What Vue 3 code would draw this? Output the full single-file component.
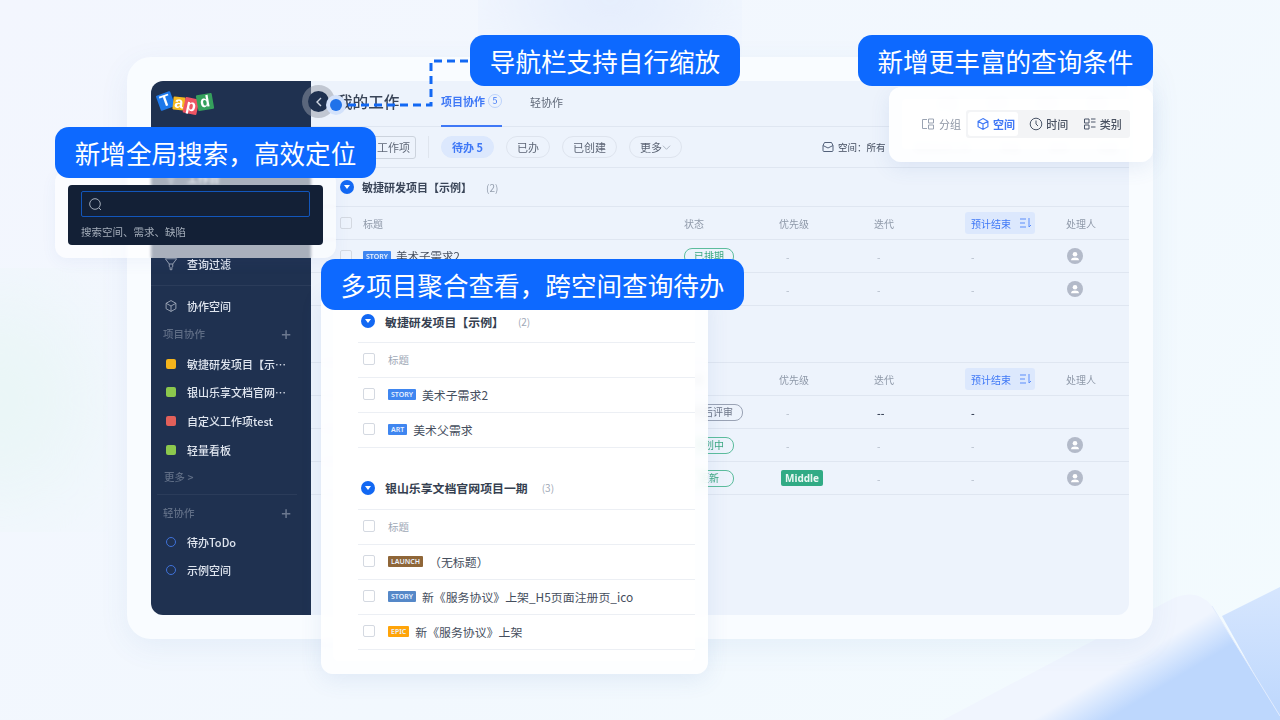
<template>
  <div class="page">
    <svg class="bg-shapes" width="1280" height="720" viewBox="0 0 1280 720">
      <defs>
        <linearGradient id="tri" x1="0" y1="0" x2="0" y2="1">
          <stop offset="0" stop-color="#d6e6fe" />
          <stop offset="1" stop-color="#bdd7fd" />
        </linearGradient>
        <linearGradient id="glass" gradientUnits="userSpaceOnUse" x1="1140" y1="655" x2="1160" y2="688">
          <stop offset="0" stop-color="#f0f5fe" />
          <stop offset="0.5" stop-color="#d6e6fe" />
          <stop offset="1" stop-color="#bdd7fd" />
        </linearGradient>
        <filter id="soft"><feGaussianBlur stdDeviation="50" /></filter>
      </defs>
      <ellipse cx="610" cy="0" rx="110" ry="50" fill="#dfe9fc" filter="url(#soft)" />
      <ellipse cx="0" cy="400" rx="90" ry="110" fill="#e9f6f6" filter="url(#soft)" />
      <polygon points="1222,616 1280,587 1280,720" fill="url(#tri)" />
      <path d="M943 720 L1168 601 Q1196 586 1212 606 L1280 716 L1280 720 Z" fill="url(#glass)" />
      <path d="M1212 606 L1280 716" fill="none" stroke="#e2ecfd" />
    </svg>

    <div class="frame">
      <div class="app">
        <aside class="side">
          <div class="logo">
            <span class="tile t1">T</span><span class="tile t2">a</span><span class="tile t3">p</span><span class="tile t4">d</span>
          </div>
          <div class="nav">
            <div v-for="n in topNav" :key="n" class="nav-item">
              <svg class="nav-ico" viewBox="0 0 16 16"><path d="M1.500 2h13L10 8v3l-1 .8V14.500H7V11.800L6 11V8zM6 8h4" /></svg>
              <span>{{ n }}</span>
            </div>
          </div>
          <div class="rule"></div>
          <div class="nav-item space-link">
            <svg class="nav-ico" viewBox="0 0 16 16"><path d="M8 1.800l5.600 3.100v6.200L8 14.200l-5.600-3.100V4.900zM2.400 4.900L8 8l5.600-3.100M8 8v6.200" /></svg>
            <span>协作空间</span>
          </div>
          <div class="label"><span>项目协作</span><b>+</b></div>
          <div v-for="p in projects" :key="p.name" class="nav-item">
            <i class="sq" :style="{ background: p.color }"></i>
            <span class="clip">{{ p.name }}</span>
          </div>
          <div class="more-link">更多 <span>&gt;</span></div>
          <div class="rule short"></div>
          <div class="label"><span>轻协作</span><b>+</b></div>
          <div v-for="s in lightSpaces" :key="s" class="nav-item">
            <i class="ring"></i>
            <span>{{ s }}</span>
          </div>
        </aside>

        <main class="main">
          <header class="head">
            <h1>我的工作</h1>
            <div class="tab on">项目协作 <em>5</em></div>
            <div class="tab">轻协作</div>
            <div class="head-right">
              <span>分组</span><span>空间</span><span>时间</span><span>类别</span>
            </div>
          </header>
          <div class="toolbar">
            <button class="add">添加工作项</button>
            <i class="vline"></i>
            <span class="pill on">待办 5</span>
            <span class="pill">已办</span>
            <span class="pill">已创建</span>
            <span class="pill">更多<svg width="9" height="9" viewBox="0 0 10 10"><path d="M1 3l4 4 4-4" fill="none" stroke="#a9b2c0" /></svg></span>
            <div class="tools">
              <svg width="12" height="12" viewBox="0 0 12 12"><path d="M2.500 1.500h7l1.500 3v5a1 1 0 0 1-1 1H2a1 1 0 0 1-1-1v-5zM1 4.500l5 2.500 5-2.500" fill="none" stroke="#53617a" /></svg>
              <span class="space-txt">空间：所有</span>
              <span class="ghost">项目协作工作</span>
              <span class="ghost">筛选</span>
              <span class="ghost">排序</span>
              <span class="ghost">视图</span>
            </div>
          </div>

          <section v-for="(g, gi) in groups" :key="g.name" class="group">
            <div class="g-title" :class="{ tall: gi === 1 }">
              <i class="caret"></i>
              <strong>{{ g.name }}</strong>
              <span>({{ g.rows.length }})</span>
            </div>
            <div class="t-row t-head">
              <i class="box"></i>
              <span>标题</span>
              <span>状态</span>
              <span>优先级</span>
              <span>迭代</span>
              <span class="sorted">预计结束
                <svg width="13" height="12" viewBox="0 0 13 12"><path d="M1 2h6M1 6h5M1 10h6M10 1v9l2-2" fill="none" stroke="#5a8dfb" /></svg>
              </span>
              <span>处理人</span>
            </div>
            <div v-for="r in g.rows" :key="r.title" class="t-row">
              <i class="box"></i>
              <span class="t-name"><u class="tag" :style="{ background: r.tagColor }">{{ r.tag }}</u>{{ r.title }}</span>
              <span><b class="status" :class="r.tone">{{ r.status }}</b></span>
              <span class="c-prio">
                <b v-if="r.prio" class="prio">{{ r.prio }}</b>
                <template v-else>-</template>
              </span>
              <span class="c-iter" :class="{ dark: r.noUser }">{{ r.noUser ? '--' : '-' }}</span>
              <span class="c-end" :class="{ dark: r.noUser }">-</span>
              <span>
                <svg v-if="!r.noUser" class="avatar" viewBox="0 0 16 16"><circle cx="8" cy="8" r="8" fill="#b3bac9" /><circle cx="8" cy="6.200" r="2.300" fill="#fff" /><path d="M4 12.200c0-2 1.800-2.700 4-2.700s4 .7 4 2.700z" fill="#fff" /></svg>
              </span>
            </div>
          </section>
        </main>
      </div>
    </div>

    <!-- 引导标注 -->
    <div class="handle"><svg width="8" height="10" viewBox="0 0 8 10"><path d="M6 1L2 5l4 4" fill="none" stroke="#cfd6e2" stroke-width="1.400" /></svg></div>
    <svg class="dash" width="140" height="60" viewBox="0 0 140 60">
      <path d="M136 3H86V47H0" fill="none" stroke="#1268f3" stroke-width="3" stroke-dasharray="8 5" />
    </svg>
    <i class="dot"></i>

    <div class="search-card">
      <div class="search-panel">
        <div class="search-input">
          <svg width="15" height="15" viewBox="0 0 15 15"><circle cx="7" cy="7" r="5.300" fill="none" stroke="#a4adba" /><path d="M11 11l2 2" stroke="#a4adba" /></svg>
        </div>
        <p>搜索空间、需求、缺陷</p>
      </div>
    </div>

    <div class="filter-card">
      <div class="filter-inner">
        <span class="f-plain">
          <svg width="14" height="14" viewBox="0 0 14 14"><path d="M6 2.500H1.500v9H6M7.500 2h5v4h-5zM7.500 8h5v4h-5z" fill="none" stroke="#9aa3b2" /></svg>分组
        </span>
        <div class="seg">
          <span class="seg-item on">
            <svg width="14" height="14" viewBox="0 0 16 16"><path d="M8 1.800l5.600 3.100v6.200L8 14.200l-5.600-3.100V4.900zM2.400 4.900L8 8l5.600-3.100M8 8v6.200" fill="none" stroke="#3f78f6" stroke-width="1.300" /></svg>空间
          </span>
          <span class="seg-item">
            <svg width="14" height="14" viewBox="0 0 14 14"><circle cx="7" cy="7" r="5.800" fill="none" stroke="#4a5568" /><path d="M7 3.500V7l2 2" fill="none" stroke="#4a5568" /></svg>时间
          </span>
          <span class="seg-item">
            <svg width="14" height="14" viewBox="0 0 14 14"><path d="M1.500 2h4.500v4H1.500zM8 2h4.500M8 5h4.500M1.500 8h4.500v4H1.500zM8 10h4.500" fill="none" stroke="#4a5568" /></svg>类别
          </span>
        </div>
      </div>
    </div>

    <div class="popup">
      <div class="popup-inner">
        <div v-for="(g, gi) in popupGroups" :key="g.name" class="p-group" :class="{ second: gi === 1 }">
          <div class="p-title">
            <i class="caret"></i>
            <strong>{{ g.name }}</strong>
            <span>({{ g.rows.length }})</span>
          </div>
          <div class="p-row muted"><i class="box"></i>标题</div>
          <div v-for="r in g.rows" :key="r.title" class="p-row">
            <i class="box"></i>
            <u class="tag" :style="{ background: r.tagColor }">{{ r.tag }}</u>
            <span>{{ r.title }}</span>
          </div>
        </div>
      </div>
    </div>

    <div class="callout c-nav">导航栏支持自行缩放</div>
    <div class="callout c-filter">新增更丰富的查询条件</div>
    <div class="callout c-search">新增全局搜索，高效定位</div>
    <div class="callout c-multi">多项目聚合查看，跨空间查询待办</div>
  </div>
</template>

<script setup>
const topNav = ['工作台', '我的工作', '消息通知', '查询过滤']
const projects = [
  { name: '敏捷研发项目【示例】', color: '#f4b41c' },
  { name: '银山乐享文档官网项目一期', color: '#8bc84d' },
  { name: '自定义工作项test', color: '#e2605a' },
  { name: '轻量看板', color: '#8bc84d' }
]
const lightSpaces = ['待办ToDo', '示例空间']

const STORY = '#3f86f0'
const groups = [
  {
    name: '敏捷研发项目【示例】',
    rows: [
      { tag: 'STORY', tagColor: STORY, title: '美术子需求2', status: '已排期', tone: 'green' },
      { tag: 'ART', tagColor: STORY, title: '美术父需求', status: '已排期', tone: 'green' }
    ]
  },
  {
    name: '银山乐享文档官网项目一期',
    rows: [
      { tag: 'LAUNCH', tagColor: '#8f6638', title: '（无标题）', status: '发布后评审', tone: 'gray', noUser: true },
      { tag: 'STORY', tagColor: '#5588c8', title: '新《服务协议》上架', status: '规划中', tone: 'green' },
      { tag: 'EPIC', tagColor: '#ffa409', title: '新《服务协议》上架', status: '更新', tone: 'green wide', prio: 'Middle' }
    ]
  }
]
const popupGroups = [
  {
    name: '敏捷研发项目【示例】',
    rows: [
      { tag: 'STORY', tagColor: STORY, title: '美术子需求2' },
      { tag: 'ART', tagColor: STORY, title: '美术父需求' }
    ]
  },
  {
    name: '银山乐享文档官网项目一期',
    rows: [
      { tag: 'LAUNCH', tagColor: '#8f6638', title: '（无标题）' },
      { tag: 'STORY', tagColor: '#5588c8', title: '新《服务协议》上架_H5页面注册页_ico' },
      { tag: 'EPIC', tagColor: '#ffa409', title: '新《服务协议》上架' }
    ]
  }
]
</script>

<style>
html, body { margin: 0; background: #f4f9fe; }
</style>

<style scoped>
.page {
  position: relative;
  width: 1280px;
  height: 720px;
  overflow: hidden;
  box-sizing: border-box;
  padding: 57px 127px 0;
  font-family: "Noto Sans CJK SC", "Noto Sans", sans-serif;
  background: linear-gradient(135deg, #f3f6fe 0%, #f2f8fe 55%, #f3fbfe 100%);
  color: #2f3a4d;
}
.bg-shapes { position: absolute; left: 0; top: 0; }

.frame {
  position: relative;
  height: 582px;
  box-sizing: border-box;
  padding: 24px;
  border-radius: 24px;
  background: #f9fcff;
  box-shadow: 0 8px 30px rgba(70, 110, 180, .08);
}
.app {
  display: flex;
  height: 534px;
  border-radius: 12px;
  overflow: hidden;
  filter: blur(.35px);
}

/* sidebar */
.side {
  width: 160px;
  flex: none;
  background: #1f3150;
  color: #dfe5ef;
  font-size: 11px;
  font-weight: 500;
}
.logo {
  display: flex;
  height: 83px;
  padding: 12px 0 0 7px;
  box-sizing: border-box;
}
.tile {
  width: 15px;
  height: 16px;
  line-height: 16px;
  text-align: center;
  color: #fff;
  font-family: "Liberation Sans", sans-serif;
  font-size: 16px;
  font-weight: 700;
  border-radius: 1px;
}
.t1 { background: #1d78ea; transform: rotate(-20deg); }
.t2 { background: #f5b81f; width: 12px; height: 13px; line-height: 12px; margin: 4px 0 0 0; transform: rotate(6deg); }
.t3 { background: #ee5564; width: 14px; margin: 5px 0 0 -1px; transform: rotate(12deg); }
.t4 { background: #35a05c; width: 16px; margin: 1px 0 0 -1px; transform: rotate(-10deg); }
.nav-item {
  display: flex;
  align-items: center;
  height: 28.7px;
  padding-left: 13px;
}
.nav-ico {
  width: 14px;
  height: 14px;
  margin-right: 9px;
  fill: none;
  stroke: #a3adbd;
}
.space-link { margin-top: 6px; }
.clip {
  width: 104px;
  white-space: nowrap;
  overflow: hidden;
  text-overflow: ellipsis;
}
.rule { height: 1px; margin-top: 6px; background: #2b3c5a; }
.rule.short { margin: 4px 14px 7px 6px; }
.label {
  display: flex;
  align-items: center;
  justify-content: space-between;
  height: 20px;
  margin: 3px 0 6px;
  padding: 0 20px 0 12px;
  color: #5f6d85;
  font-size: 10.500px;
}
.rule.short + .label { margin-top: 0; margin-bottom: 5px; }
.label b { font-size: 17px; font-weight: 500; color: #6b788f; }
.sq {
  width: 10px;
  height: 10px;
  margin: 0 11px 0 2px;
  border-radius: 2px;
  flex: none;
}
.ring {
  width: 8px;
  height: 8px;
  margin: 0 11px 0 2px;
  border: 1.500px solid #3f72d9;
  border-radius: 50%;
  flex: none;
}
.more-link {
  height: 26px;
  line-height: 26px;
  padding-left: 13px;
  color: #5f6d85;
  font-size: 10.500px;
}

/* main */
.main {
  flex: 1;
  min-width: 0;
  background: #edf3fc;
  font-size: 10px;
}
.head {
  display: flex;
  align-items: center;
  height: 46px;
  box-sizing: border-box;
  padding-left: 26px;
  border-bottom: 1px solid #dfe6f1;
}
.head h1 {
  width: 104px;
  margin: 0 0 5px;
  font-size: 15.600px;
  font-weight: 500;
  color: #3a4558;
}
.tab {
  display: flex;
  align-items: center;
  height: 46px;
  box-sizing: border-box;
  padding-bottom: 3px;
  margin-right: 28px;
  font-size: 11px;
  color: #5f6878;
}
.tab.on {
  color: #3f78f6;
  font-weight: 700;
  border-bottom: 2px solid #3f78f6;
}
.tab em {
  width: 12px;
  height: 12px;
  line-height: 12px;
  margin-left: 3px;
  border: 1px solid #bcd2fb;
  border-radius: 50%;
  font-style: normal;
  font-weight: 400;
  font-size: 9px;
  text-align: center;
}
.head-right {
  display: flex;
  gap: 30px;
  margin-left: auto;
  padding-right: 22px;
  font-size: 10px;
  color: #8fa0bc;
}
.toolbar {
  display: flex;
  align-items: center;
  height: 41px;
  box-sizing: border-box;
  border-bottom: 1px solid #dfe6f1;
  white-space: nowrap;
}
.add {
  width: 105px;
  height: 23px;
  padding: 0 0 0 43px;
  text-align: left;
  font: inherit;
  font-size: 11px;
  color: #5f6878;
  background: transparent;
  border: 1px solid #ccd3dd;
  border-radius: 3px;
  flex: none;
}
.vline { width: 1px; height: 22px; margin: 0 12px; background: #dfe5ee; flex: none; }
.pill {
  display: flex;
  align-items: center;
  height: 22px;
  margin-right: 12px;
  padding: 0 10px;
  border: 1px solid #dee4ee;
  border-radius: 12px;
  box-sizing: border-box;
  font-size: 11px;
  color: #5b6474;
  flex: none;
}
.pill.on {
  color: #3f78f6;
  font-weight: 700;
  background: #dce8fd;
  border-color: #dce8fd;
}
.tools {
  display: flex;
  align-items: center;
  gap: 4px;
  margin-left: 128px;
  color: #424c5e;
  font-size: 9.500px;
}
.space-txt { margin-right: 24px; }
.ghost { margin-right: 26px; color: #a7b1c0; }

.g-title {
  display: flex;
  align-items: center;
  height: 38px;
  padding-left: 29px;
  border-bottom: 1px solid #dfe6f1;
}
.g-title.tall { height: 56px; }
.g-title strong { margin-left: 8px; font-size: 11px; font-weight: 700; color: #3a4558; }
.g-title span { margin-left: 14px; color: #949eae; }
.caret {
  position: relative;
  width: 14px;
  height: 14px;
  flex: none;
  border-radius: 50%;
  background: #1268f3;
}
.caret::after {
  content: "";
  position: absolute;
  left: 3.500px;
  top: 5px;
  border: 3.500px solid transparent;
  border-top: 4px solid #fff;
  border-bottom: 0;
}
.t-row {
  display: grid;
  grid-template-columns: 23px 321px 95px 95px 91px 101px 1fr;
  align-items: center;
  height: 32px;
  padding-left: 29px;
  border-bottom: 1px solid #dfe6f1;
  color: #b0b8c5;
}
.t-head { color: #8f99a9; }
.box {
  width: 12px;
  height: 12px;
  flex: none;
  box-sizing: border-box;
  border: 1px solid #d4d9e1;
  border-radius: 2px;
  background: #fff;
}
.t-row .box { background: transparent; }
.sorted {
  display: flex;
  align-items: center;
  gap: 8px;
  width: 70px;
  height: 22px;
  padding-left: 6px;
  box-sizing: border-box;
  color: #3f78f6;
  background: #dce8fd;
  border-radius: 3px;
}
.t-name {
  display: flex;
  align-items: center;
  gap: 5px;
  font-size: 11.500px;
  color: #47505f;
}
.status {
  display: inline-block;
  height: 15px;
  line-height: 14px;
  padding: 0 9px;
  border: 1px solid #5cbd9d;
  border-radius: 8px;
  font-size: 10px;
  font-weight: 400;
  white-space: nowrap;
}
.status.green { color: #3aa880; }
.status.wide { padding: 0 14px; }
.status.gray { margin-left: -11px; color: #6d7688; border-color: #9aa3b5; }
.c-prio { padding-left: 7px; }
.prio {
  display: inline-block;
  height: 16px;
  line-height: 16px;
  margin-left: -5px;
  padding: 0 4px;
  border-radius: 2px;
  background: #31ab85;
  color: #e9f7f2;
  font-family: "Noto Sans", sans-serif;
  font-size: 10px;
  font-weight: 700;
}
.c-iter { padding-left: 3px; }
.c-end { padding-left: 6px; }
.dark { color: #3c465a; font-weight: 700; }
.avatar { display: block; width: 16px; height: 16px; margin-left: 1px; }
.tag {
  display: inline-block;
  height: 11px;
  line-height: 11px;
  padding: 0 3px;
  border-radius: 1px;
  color: #eaf2ff;
  font-family: "Noto Sans", sans-serif;
  font-size: 7px;
  font-weight: 600;
  text-decoration: none;
  white-space: nowrap;
}

/* overlays */
.handle {
  position: absolute;
  left: 308px;
  top: 91px;
  display: flex;
  align-items: center;
  justify-content: center;
  width: 21px;
  height: 21px;
  border-radius: 50%;
  background: #1f3150;
  box-shadow: 0 0 0 6px rgba(150, 156, 168, .5);
}
.dash { position: absolute; left: 345px; top: 58px; }
.dot {
  position: absolute;
  left: 330px;
  top: 99px;
  width: 12px;
  height: 12px;
  border-radius: 50%;
  background: #1f72ea;
  box-shadow: 0 0 0 4px #d3e2fb;
}
.callout {
  position: absolute;
  display: flex;
  align-items: center;
  justify-content: center;
  height: 51px;
  box-sizing: border-box;
  border-radius: 14px;
  background: #0d69ff;
  color: #fff;
  font-size: 25.600px;
  white-space: nowrap;
}
.c-nav { left: 470px; top: 35px; width: 270px; }
.c-filter { left: 858px; top: 35px; width: 295px; }
.c-search { left: 55px; top: 127px; width: 321px; }
.c-multi { left: 321px; top: 259px; width: 423px; }

.search-card {
  position: absolute;
  left: 55px;
  top: 170px;
  width: 281px;
  height: 88px;
  box-sizing: border-box;
  padding: 15px 13px 0;
  border-radius: 12px;
  background: rgba(255, 255, 255, .62);
  backdrop-filter: blur(1.500px);
  box-shadow: 0 4px 16px rgba(70, 110, 180, .06);
}
.search-panel {
  height: 60px;
  box-sizing: border-box;
  padding: 6px 13px 0;
  border-radius: 4px;
  background: #132036;
}
.search-input {
  display: flex;
  align-items: center;
  height: 26px;
  box-sizing: border-box;
  padding-left: 6px;
  border: 1px solid #1256bb;
  border-radius: 2px;
}
.search-panel p {
  margin: 7px 0 0;
  font-size: 10.500px;
  color: #a4adba;
  filter: blur(.25px);
}

.filter-card {
  position: absolute;
  left: 889px;
  top: 87px;
  width: 264px;
  height: 75px;
  box-sizing: border-box;
  padding: 12px 23px 0 13px;
  border-radius: 12px;
  background: rgba(255, 255, 255, .88);
  backdrop-filter: blur(3px);
  box-shadow: 0 6px 20px rgba(70, 110, 180, .1);
}
.filter-inner {
  display: flex;
  align-items: center;
  height: 50px;
  border-radius: 4px;
  background: rgba(255, 255, 255, .7);
  font-size: 11px;
}
.f-plain {
  display: flex;
  align-items: center;
  gap: 4px;
  width: 64px;
  padding-left: 19px;
  box-sizing: border-box;
  color: #8d95a4;
}
.seg {
  display: flex;
  align-items: center;
  height: 28px;
  width: 164px;
  box-sizing: border-box;
  padding: 2px;
  border-radius: 3px;
  background: #f3f4f6;
  color: #4a5262;
  font-weight: 500;
}
.seg-item {
  display: flex;
  align-items: center;
  gap: 3px;
  height: 24px;
  width: 51px;
  box-sizing: border-box;
  margin-right: 3px;
  padding-left: 8px;
  border-radius: 3px;
}
.seg-item.on { background: #fff; color: #3f78f6; font-weight: 700; }

.popup {
  position: absolute;
  left: 321px;
  top: 290px;
  width: 387px;
  height: 384px;
  box-sizing: border-box;
  padding: 12px 13px 13px 12px;
  border-radius: 12px;
  background: rgba(255, 255, 255, .86);
  backdrop-filter: blur(3px);
  box-shadow: 0 6px 22px rgba(70, 110, 180, .1);
}
.popup-inner {
  height: 359px;
  padding-left: 25px;
  border-radius: 6px;
  background: #fff;
  font-size: 11.900px;
}
.p-group.second { padding-top: 20px; }
.p-title {
  display: flex;
  align-items: center;
  height: 38px;
  padding: 0 0 2px 3px;
  border-bottom: 1px solid #eceff4;
}
.second .p-title { height: 39px; }
.p-title strong { margin-left: 10px; font-size: 11.900px; font-weight: 700; color: #353f50; }
.p-title span { margin-left: 14px; font-size: 10px; color: #a0a8b6; }
.p-row {
  display: flex;
  align-items: center;
  height: 32px;
  padding: 0 0 2px 5px;
  border-bottom: 1px solid #eceff4;
  color: #454e5d;
}
.p-row.muted { color: #a0a8b6; font-size: 10.500px; }
.p-row .box { margin-right: 13px; }
.p-row .tag { margin-right: 6px; }
</style>
